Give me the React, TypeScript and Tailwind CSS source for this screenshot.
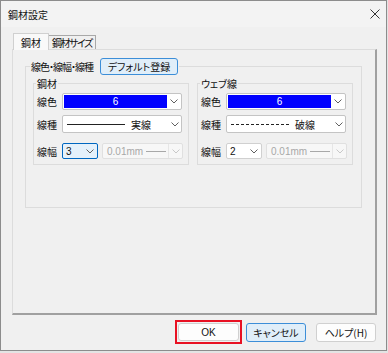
import React from 'react'

const jp = "font-['Yu_Gothic_UI','Noto_Sans_CJK_JP',sans-serif] [font-feature-settings:'palt']"

const Chevron = ({ light }: { light?: boolean }) => (
  <svg width="8" height="5" viewBox="0 0 8 5" className={light ? 'text-[#c8c8c8]' : 'text-[#606060]'}>
    <path d="M0.5 0.5 L4 4 L7.5 0.5" fill="none" stroke="currentColor" strokeWidth="1" />
  </svg>
)

const ColorCombo = () => (
  <div className="w-[120px] h-[17px] border border-[#c4c4c4] rounded-[2px] bg-white flex items-stretch p-[1px]">
    <div className="flex-1 bg-[#0000ff] text-white text-[10px] flex items-center justify-center font-['Liberation_Sans',sans-serif]">
      6
    </div>
    <div className="w-[13px] flex items-center justify-center">
      <Chevron />
    </div>
  </div>
)

const LineCombo = ({ dashed, label }: { dashed?: boolean; label: string }) => (
  <div className="w-[120px] h-[18px] border border-[#c4c4c4] rounded-[2px] bg-white flex items-center pl-[4px]">
    <div className={`w-[58px] border-t border-[#222] ${dashed ? 'border-dashed' : ''}`} />
    <span className={`ml-[6px] text-[10px] text-[#111] ${jp}`}>{label}</span>
    <div className="ml-auto w-[13px] flex items-center justify-center">
      <Chevron />
    </div>
  </div>
)

const WidthRow = ({ value, focused }: { value: string; focused?: boolean }) => (
  <div className="flex items-center gap-[4px]">
    <div
      className={`w-[36px] h-[16px] border rounded-[2px] flex items-center pl-[3px] pr-[3px] text-[10px] text-[#111] font-['Liberation_Sans',sans-serif] ${
        focused ? 'border-[#0067c0] bg-[#e5f1fb]' : 'border-[#d0d0d0] bg-white'
      }`}
    >
      <span>{value}</span>
      <span className="ml-auto flex">
        <Chevron />
      </span>
    </div>
    <div className="w-[81px] h-[16px] border border-[#e0e0e0] rounded-[2px] bg-[#f7f7f7] flex items-center pl-[4px] text-[10px] text-[#a8a8a8] font-['Liberation_Sans',sans-serif]">
      <span>0.01mm</span>
      <div className="ml-[3px] w-[20px] border-t border-[#a8a8a8]" />
      <div className="ml-auto h-full border-l border-[#e6e6e6] w-[14px] flex items-center justify-center">
        <Chevron light />
      </div>
    </div>
  </div>
)

const SubGroup = ({ title, dashed, lineLabel, width, focused }: { title: string; dashed?: boolean; lineLabel: string; width: string; focused?: boolean }) => (
  <fieldset className="w-[156px] h-[88px] border border-[#dcdcdc] px-[2px]">
    <legend className={`px-[1px] text-[10px] leading-[13px] text-[#111] ${jp}`}>{title}</legend>
    <div className="mt-[3px] flex items-center h-[17px]">
      <span className={`w-[26px] pl-[1px] text-[10px] text-[#111] ${jp}`}>線色</span>
      <ColorCombo />
    </div>
    <div className="mt-[5px] flex items-center h-[18px]">
      <span className={`w-[26px] pl-[1px] text-[10px] text-[#111] ${jp}`}>線種</span>
      <LineCombo dashed={dashed} label={lineLabel} />
    </div>
    <div className="mt-[10px] flex items-center h-[16px]">
      <span className={`w-[26px] pl-[1px] text-[10px] text-[#111] ${jp}`}>線幅</span>
      <WidthRow value={width} focused={focused} />
    </div>
  </fieldset>
)

export default function App() {
  return (
    <div className="w-[388px] h-[353px] bg-[#e4e4e4]">
      <div className="w-[387px] h-[351px] border border-[#8c8c8c] bg-[#f0f0f0] flex flex-col">
        <div className="h-[26px] shrink-0 bg-[#f3f3f3] flex items-center justify-between pl-[7px] pr-[6px]">
          <span className={`text-[10px] text-[#111] ${jp}`}>鋼材設定</span>
          <svg width="10" height="10" viewBox="0 0 10 10">
            <path d="M0.5 0.5 L9.5 9.5 M9.5 0.5 L0.5 9.5" stroke="#333" strokeWidth="1" />
          </svg>
        </div>

        <div className="ml-[11px] mt-[6px] shrink-0">
          <div className="flex items-end pl-[1px]">
            <div className={`relative z-10 -mb-px h-[17px] px-[7px] bg-[#f9f9f9] border-t border-l border-r border-[#d0d0d0] text-[10px] text-[#111] flex items-center ${jp}`}>
              鋼材
            </div>
            <div className={`h-[14px] px-[3px] border-t border-r border-[#a8a8a8] text-[10px] tracking-[-1.5px] text-[#111] flex items-center ${jp}`}>
              鋼材サイズ
            </div>
          </div>

          <div className="w-[365px] h-[266px] border-t border-l border-[#dcdcdc] border-r-2 border-b-2 border-r-[#a0a0a0] border-b-[#a0a0a0] bg-[#f0f0f0] pl-[12px] pt-[8px]">
            <fieldset className="w-[337px] h-[150px] border border-[#dcdcdc] px-[4px]">
              <legend className="px-[1px]">
                <div className="flex items-center">
                  <span className={`text-[10px] tracking-[-1px] text-[#111] ${jp}`}>線色・線幅・線種</span>
                  <button className={`ml-[7px] w-[78px] h-[17px] rounded-[3px] border border-[#3c8ed8] bg-[#e0eef9] text-[10px] text-[#111] ${jp}`}>
                    デフォルト登録
                  </button>
                </div>
              </legend>
              <div className="mt-[2px] flex gap-[8px] ml-[3px]">
                <SubGroup title="鋼材" lineLabel="実線" width="3" focused />
                <SubGroup title="ウェブ線" lineLabel="破線" width="2" dashed />
              </div>
            </fieldset>
          </div>
        </div>

        <div className="mt-[5px] shrink-0 flex items-center justify-end pr-[10px]">
          <div className="w-[67px] h-[24px] border-2 border-[#e81123] p-[1px] flex">
            <button className="flex-1 rounded-[3px] border border-[#d0d0d0] bg-[#fdfdfd] text-[10px] text-[#111] font-['Liberation_Sans',sans-serif]">
              OK
            </button>
          </div>
          <button className={`ml-[4px] w-[60px] h-[19px] rounded-[3px] border border-[#3c8ed8] bg-[#e0eef9] text-[10px] text-[#111] ${jp}`}>
            キャンセル
          </button>
          <button className={`ml-[10px] w-[60px] h-[19px] rounded-[3px] border border-[#d0d0d0] bg-[#fdfdfd] text-[10px] text-[#111] ${jp}`}>
            ヘルプ(H)
          </button>
        </div>
      </div>
    </div>
  )
}
